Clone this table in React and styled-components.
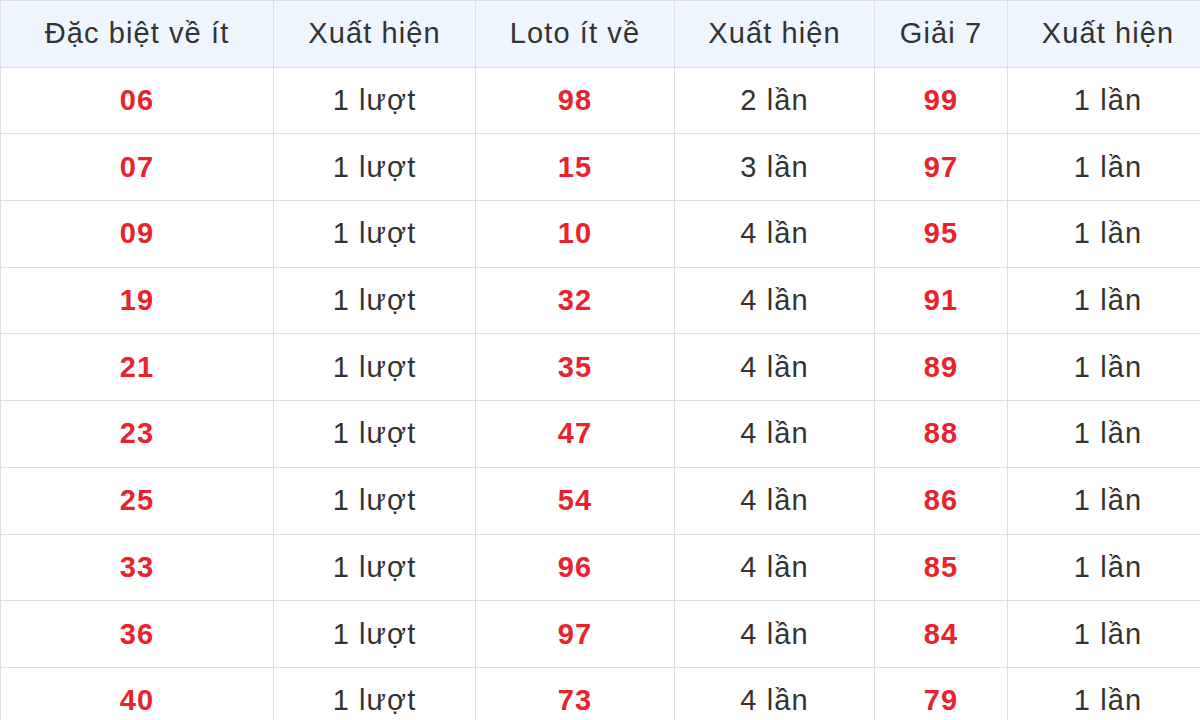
import styled, { createGlobalStyle } from "styled-components";

const GlobalStyle = createGlobalStyle`
  html, body {
    margin: 0;
    padding: 0;
    background: #fff;
    overflow: hidden;
  }
`;

const Wrap = styled.div`
  width: 1200px;
  height: 720px;
  overflow: hidden;
`;

const Table = styled.table`
  width: 1208px;
  table-layout: fixed;
  border-collapse: collapse;
  font-family: "Liberation Sans", Arial, sans-serif;
  font-size: 29px;
  letter-spacing: 1.1px;
  color: #333;
`;

const HeadCell = styled.th`
  height: 65.7px;
  padding: 0;
  font-weight: 400;
  text-align: center;
  background: #eef5fd;
  border: 1px solid #dcdfe3;
  color: #333;
`;

const Cell = styled.td`
  height: 65.7px;
  padding: 0;
  text-align: center;
  border: 1px solid #dcdfe3;
  font-weight: ${(p) => (p.$hot ? 700 : 400)};
  color: ${(p) => (p.$hot ? "#e8232e" : "#333")};
`;

const widths = [273, 202, 199, 200, 133, 201];
const headers = ["Đặc biệt về ít", "Xuất hiện", "Loto ít về", "Xuất hiện", "Giải 7", "Xuất hiện"];

const rows = [
  ["06", "1 lượt", "98", "2 lần", "99", "1 lần"],
  ["07", "1 lượt", "15", "3 lần", "97", "1 lần"],
  ["09", "1 lượt", "10", "4 lần", "95", "1 lần"],
  ["19", "1 lượt", "32", "4 lần", "91", "1 lần"],
  ["21", "1 lượt", "35", "4 lần", "89", "1 lần"],
  ["23", "1 lượt", "47", "4 lần", "88", "1 lần"],
  ["25", "1 lượt", "54", "4 lần", "86", "1 lần"],
  ["33", "1 lượt", "96", "4 lần", "85", "1 lần"],
  ["36", "1 lượt", "97", "4 lần", "84", "1 lần"],
  ["40", "1 lượt", "73", "4 lần", "79", "1 lần"],
];

export default function App() {
  return (
    <Wrap>
      <GlobalStyle />
      <Table>
        <colgroup>
          {widths.map((w, i) => (
            <col key={i} style={{ width: w }} />
          ))}
        </colgroup>
        <thead>
          <tr>
            {headers.map((h, i) => (
              <HeadCell key={i}>{h}</HeadCell>
            ))}
          </tr>
        </thead>
        <tbody>
          {rows.map((r, i) => (
            <tr key={i}>
              {r.map((c, j) => (
                <Cell key={j} $hot={j % 2 === 0}>
                  {c}
                </Cell>
              ))}
            </tr>
          ))}
        </tbody>
      </Table>
    </Wrap>
  );
}
